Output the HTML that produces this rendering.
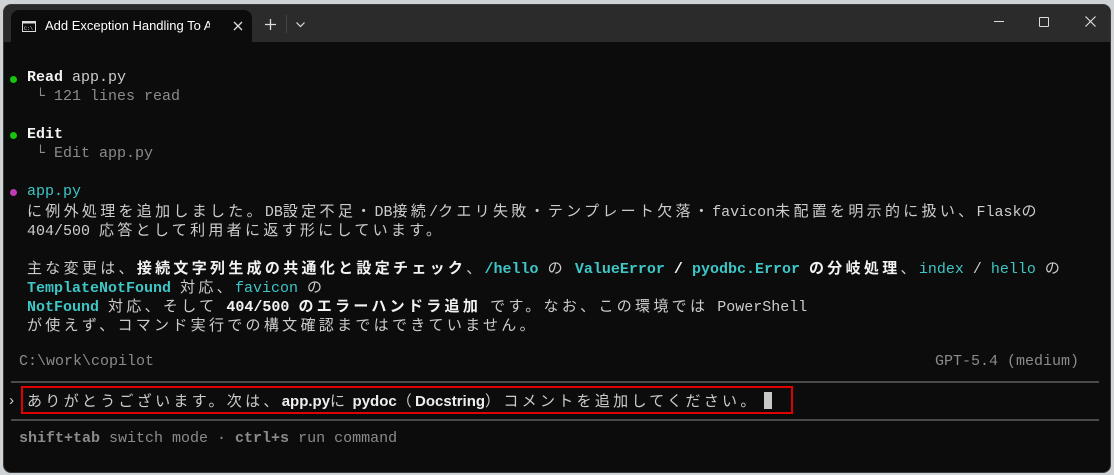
<!DOCTYPE html>
<html><head><meta charset="utf-8"><style>
*{margin:0;padding:0;box-sizing:border-box}
body{width:1114px;height:475px;background:#cfd3d6;position:relative;overflow:hidden;font-family:"Liberation Mono","Noto Sans CJK JP",monospace;font-size:15px;color:#cccccc}
.win{position:absolute;left:3px;top:4px;width:1108px;height:469px;background:#0c0c0c;border-radius:8px;overflow:hidden;border:1px solid #3a3a3a}
.tb{position:absolute;left:0;top:0;width:100%;height:37px;background:#2b2b2b}
.tab{position:absolute;left:7px;top:5px;width:241px;height:32px;background:#0c0c0c;border-radius:8px 8px 0 0}
.tab .t{position:absolute;left:34px;top:8px;font-family:"Liberation Sans",sans-serif;font-size:13px;color:#fff;width:165px;overflow:hidden;white-space:nowrap}
.l{position:absolute;white-space:pre;line-height:19px}
.j{font-family:"Noto Sans CJK JP",sans-serif;letter-spacing:3.3px;font-size:15px}
.b{font-weight:bold;color:#f2f2f2}
.c{color:#3fc6c6}
.d{color:#8b8b8b}
.dot{position:absolute;width:7px;height:7px;border-radius:50%}
.sep{position:absolute;left:7px;width:1088px;height:2px;background:#4a4a4a}
</style></head><body>
<div class="win">
<div class="tb">
<div class="tab">
<svg style="position:absolute;left:11px;top:11px" width="14" height="11" viewBox="0 0 14 11"><rect x="0.5" y="0.5" width="13" height="10" fill="none" stroke="#ddd"/><rect x="0.5" y="0.5" width="13" height="2" fill="#ddd"/><text x="2" y="9" font-size="5" fill="#ddd" font-family="Liberation Mono">C:\</text></svg>
<div class="t">Add Exception Handling To Ap</div>
<svg style="position:absolute;left:222px;top:11px" width="10" height="10"><path d="M1 1L9 9M9 1L1 9" stroke="#ddd" stroke-width="1.3"/></svg>
</div>
<svg style="position:absolute;left:261px;top:14px" width="11" height="11"><path d="M5.5 0V11M0 5.5H11" stroke="#ddd" stroke-width="1.3"/></svg>
<div style="position:absolute;left:282px;top:10px;width:1px;height:18px;background:#444"></div>
<svg style="position:absolute;left:292px;top:17px" width="9" height="6"><path d="M0.5 0.5L4.5 4.5L8.5 0.5" fill="none" stroke="#ddd" stroke-width="1.2"/></svg>
<div style="position:absolute;left:990px;top:16px;width:10px;height:1px;background:#ddd"></div>
<div style="position:absolute;left:1035px;top:12px;width:10px;height:10px;border:1px solid #ddd;border-radius:1px"></div>
<svg style="position:absolute;left:1081px;top:11px" width="11" height="11"><path d="M0.5 0.5L10.5 10.5M10.5 0.5L0.5 10.5" stroke="#ddd" stroke-width="1.2"/></svg>
</div>
<div class="dot" style="left:6px;top:71px;background:#16c60c"></div>
<div class="l" style="left:23px;top:63px"><span class="b">Read</span> <span>app.py</span></div>
<div class="l d" style="left:23px;top:82px"> └ 121 lines read</div>
<div class="dot" style="left:6px;top:127px;background:#16c60c"></div>
<div class="l b" style="left:23px;top:120px">Edit</div>
<div class="l d" style="left:23px;top:139px"> └ Edit app.py</div>
<div class="dot" style="left:6px;top:184px;background:#c13bb4"></div>
<div class="l c" style="left:23px;top:177px">app.py</div>
<div class="l" style="left:23px;top:196px"><span class="j">に例外処理を追加しました。</span>DB<span class="j">設定不足・</span>DB<span class="j">接続</span>/<span class="j">クエリ失敗・テンプレート欠落・</span>favicon<span class="j">未配置を明示的に扱い、</span>Flask<span class="j">の</span></div>
<div class="l" style="left:23px;top:215px">404/500 <span class="j">応答として利用者に返す形にしています。</span></div>
<div class="l" style="left:23px;top:253px"><span class="j">主な変更は、</span><span class="b j">接続文字列生成の共通化と設定チェック</span><span class="j">、</span><span class="c b">/hello</span> <span class="j">の</span> <span class="c b">ValueError</span> <span class="b">/</span> <span class="c b">pyodbc.Error</span> <span class="b j">の分岐処理</span><span class="j">、</span><span class="c">index</span> / <span class="c">hello</span> <span class="j">の</span></div>
<div class="l" style="left:23px;top:272px"><span class="c b">TemplateNotFound</span> <span class="j">対応、</span><span class="c">favicon</span> <span class="j">の</span></div>
<div class="l" style="left:23px;top:291px"><span class="c b">NotFound</span> <span class="j">対応、そして</span> <span class="b">404/500</span> <span class="b j">のエラーハンドラ追加</span> <span class="j">です。なお、この環境では</span> PowerShell</div>
<div class="l" style="left:23px;top:310px"><span class="j">が使えず、コマンド実行での構文確認まではできていません。</span></div>
<div class="l d" style="left:15px;top:347px">C:\work\copilot</div>
<div class="l d" style="left:931px;top:347px">GPT-5.4 (medium)</div>
<div class="sep" style="top:376px"></div>
<div class="l" style="left:3px;top:387px;color:#ccc">›</div>
<div style="position:absolute;left:17px;top:381px;width:772px;height:28px;border:2px solid #e00000"></div>
<div class="l" style="left:23px;top:386px;font-family:'Liberation Sans','Noto Sans CJK JP',sans-serif"><span class="j">ありがとうございます。次は、</span><b style="color:#eee">app.py</b><span class="j">に</span> <b style="color:#eee">pydoc</b><span class="j">（</span><b style="color:#eee">Docstring</b><span class="j">）コメントを追加してください。</span></div>
<div style="position:absolute;left:760px;top:387px;width:8px;height:17px;background:#c8c8c8"></div>
<div class="sep" style="top:414px"></div>
<div class="l d" style="left:15px;top:424px"><b>shift+tab</b> switch mode · <b>ctrl+s</b> run command</div>
</div>
</body></html>
